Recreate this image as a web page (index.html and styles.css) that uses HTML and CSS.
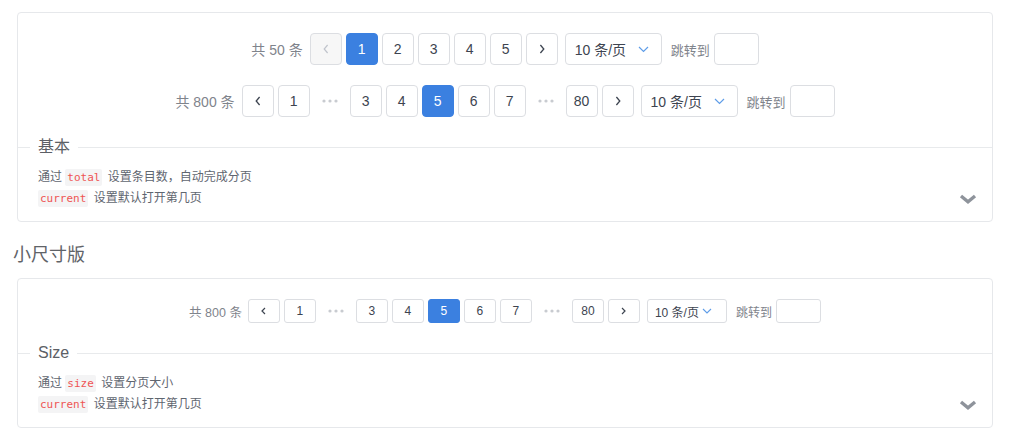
FILE: index.html
```html
<!DOCTYPE html>
<html lang="zh">
<head>
<meta charset="utf-8">
<title>Page</title>
<link rel="stylesheet" href="styles.css">
</head>
<body>
<div class="page">
  <section class="example">
    <div class="demo">
      <div class="pager">
        <span class="total">共 50 条</span>
        <ul class="items">
          <li class="item arrow disabled"><svg width="6" height="10" viewBox="0 0 6 10"><polyline points="4.6,1 1.2,5 4.6,9" fill="none" stroke="currentColor" stroke-width="1.2"/></svg></li>
          <li class="item active">1</li>
          <li class="item">2</li>
          <li class="item">3</li>
          <li class="item">4</li>
          <li class="item">5</li>
          <li class="item arrow"><svg width="6" height="10" viewBox="0 0 6 10"><polyline points="1.4,1 4.8,5 1.4,9" fill="none" stroke="currentColor" stroke-width="1.3"/></svg></li>
        </ul>
        <div class="sizer"><span>10 条/页</span><svg width="11" height="7" viewBox="0 0 11 7"><polyline points="1,1 5.5,5.5 10,1" fill="none" stroke="currentColor" stroke-width="1.2"/></svg></div>
        <div class="jump"><span>跳转到</span><span class="input"></span></div>
      </div>
      <div class="pager">
        <span class="total">共 800 条</span>
        <ul class="items">
          <li class="item arrow"><svg width="6" height="10" viewBox="0 0 6 10"><polyline points="4.6,1 1.2,5 4.6,9" fill="none" stroke="currentColor" stroke-width="1.3"/></svg></li>
          <li class="item">1</li>
          <li class="item more"><svg width="16" height="4" viewBox="0 0 16 4"><circle cx="2" cy="2" r="1.6"/><circle cx="8" cy="2" r="1.6"/><circle cx="14" cy="2" r="1.6"/></svg></li>
          <li class="item">3</li>
          <li class="item">4</li>
          <li class="item active">5</li>
          <li class="item">6</li>
          <li class="item">7</li>
          <li class="item more"><svg width="16" height="4" viewBox="0 0 16 4"><circle cx="2" cy="2" r="1.6"/><circle cx="8" cy="2" r="1.6"/><circle cx="14" cy="2" r="1.6"/></svg></li>
          <li class="item">80</li>
          <li class="item arrow"><svg width="6" height="10" viewBox="0 0 6 10"><polyline points="1.4,1 4.8,5 1.4,9" fill="none" stroke="currentColor" stroke-width="1.3"/></svg></li>
        </ul>
        <div class="sizer"><span>10 条/页</span><svg width="11" height="7" viewBox="0 0 11 7"><polyline points="1,1 5.5,5.5 10,1" fill="none" stroke="currentColor" stroke-width="1.2"/></svg></div>
        <div class="jump"><span>跳转到</span><span class="input"></span></div>
      </div>
    </div>
    <div class="split"><span class="legend">基本</span></div>
    <div class="desc">
      <div class="desc-text">
        <p>通过 <code>total</code> 设置条目数，自动完成分页</p>
        <p><code>current</code> 设置默认打开第几页</p>
      </div>
      <span class="toggle"><svg width="18" height="21" viewBox="0 0 18 21"><polyline points="2,8 9,13.8 16,8" fill="none" stroke="currentColor" stroke-width="3.4"/></svg></span>
    </div>
  </section>

  <h2 class="title">小尺寸版</h2>

  <section class="example">
    <div class="demo">
      <div class="pager small">
        <span class="total">共 800 条</span>
        <ul class="items">
          <li class="item arrow"><svg width="5" height="8" viewBox="0 0 5 8"><polyline points="4,1 1,4 4,7" fill="none" stroke="currentColor" stroke-width="1.2"/></svg></li>
          <li class="item">1</li>
          <li class="item more"><svg width="16" height="4" viewBox="0 0 16 4"><circle cx="2" cy="2" r="1.6"/><circle cx="8" cy="2" r="1.6"/><circle cx="14" cy="2" r="1.6"/></svg></li>
          <li class="item">3</li>
          <li class="item">4</li>
          <li class="item active">5</li>
          <li class="item">6</li>
          <li class="item">7</li>
          <li class="item more"><svg width="16" height="4" viewBox="0 0 16 4"><circle cx="2" cy="2" r="1.6"/><circle cx="8" cy="2" r="1.6"/><circle cx="14" cy="2" r="1.6"/></svg></li>
          <li class="item">80</li>
          <li class="item arrow"><svg width="5" height="8" viewBox="0 0 5 8"><polyline points="1,1 4,4 1,7" fill="none" stroke="currentColor" stroke-width="1.2"/></svg></li>
        </ul>
        <div class="sizer"><span>10 条/页</span><svg width="10" height="6" viewBox="0 0 10 6"><polyline points="1,1 5,5 9,1" fill="none" stroke="currentColor" stroke-width="1.1"/></svg></div>
        <div class="jump"><span>跳转到</span><span class="input"></span></div>
      </div>
    </div>
    <div class="split"><span class="legend">Size</span></div>
    <div class="desc">
      <div class="desc-text">
        <p>通过 <code>size</code> 设置分页大小</p>
        <p><code>current</code> 设置默认打开第几页</p>
      </div>
      <span class="toggle"><svg width="18" height="21" viewBox="0 0 18 21"><polyline points="2,8 9,13.8 16,8" fill="none" stroke="currentColor" stroke-width="3.4"/></svg></span>
    </div>
  </section>
</div>
</body>
</html>
```

FILE: styles.css
```css
html, body {
  margin: 0;
  padding: 0;
  background: #fff;
}

body {
  font-family: "Liberation Sans", "Noto Sans CJK SC", sans-serif;
  color: #515a6e;
}

.page {
  padding: 12px 23px 0 13px;
}

.example {
  margin-left: 4px;
  border: 1px solid #e6e8eb;
  border-radius: 4px;
  background: #fff;
}

.demo {
  display: flex;
  flex-direction: column;
  align-items: center;
  gap: 20px;
  padding: 20px;
}

.pager {
  display: flex;
  align-items: center;
  font-size: 14px;
}

.total {
  margin-right: 7px;
  font-size: 14px;
  color: #7f848c;
  white-space: nowrap;
}

.items {
  display: flex;
  gap: 4px;
  margin: 0;
  padding: 0;
  list-style: none;
}

.item {
  box-sizing: border-box;
  min-width: 32px;
  height: 32px;
  line-height: 30px;
  border: 1px solid #dcdee2;
  border-radius: 4px;
  text-align: center;
  color: #3d4450;
  background: #fff;
  display: flex;
  align-items: center;
  justify-content: center;
}

.item.arrow {
  color: #3d4450;
}

.item.disabled {
  background: #f7f7f7;
  color: #c0c4cc;
}

.item.active {
  background: #3b80e0;
  border-color: #3b80e0;
  color: #fff;
}

.item.more {
  border-color: transparent;
  fill: #c8cbd0;
}

.sizer {
  box-sizing: border-box;
  width: 97px;
  height: 32px;
  margin-left: 7px;
  padding: 0 12px 0 9px;
  border: 1px solid #dcdee2;
  border-radius: 4px;
  display: flex;
  align-items: center;
  justify-content: space-between;
  color: #3d4450;
  white-space: nowrap;
}

.sizer svg {
  color: #5f9de8;
}

.jump {
  display: flex;
  align-items: center;
  gap: 4px;
  margin-left: 9px;
  font-size: 13px;
  color: #7f848c;
  white-space: nowrap;
}

.input {
  box-sizing: border-box;
  width: 45px;
  height: 32px;
  border: 1px solid #dcdee2;
  border-radius: 4px;
}

/* small */
.pager.small .total {
  font-size: 12.5px;
  margin-right: 6px;
}

.pager.small .item {
  height: 24px;
  line-height: 22px;
  font-size: 12px;
  border-radius: 3px;
}

.pager.small .item.more {
  border-color: transparent;
}

.pager.small .sizer {
  width: 80px;
  height: 24px;
  margin-left: 7px;
  padding: 0 14px 0 7px;
  font-size: 12px;
  border-radius: 3px;
}

.pager.small .jump {
  font-size: 12px;
  margin-left: 9px;
}

.pager.small .input {
  height: 24px;
  border-radius: 3px;
}

/* split line with legend */
.split {
  display: flex;
  align-items: center;
  height: 20px;
}

.split::before,
.split::after {
  content: "";
  height: 1px;
  background: #e8eaec;
}

.split::before {
  flex: 0 0 12px;
}

.split::after {
  flex: 1 1 auto;
}

.legend {
  padding: 0 8px;
  font-size: 16px;
  line-height: 20px;
  color: #5c6066;
}

/* description */
.desc {
  display: flex;
  justify-content: space-between;
  align-items: flex-end;
  padding: 10px 15px 12px 20px;
}

.desc-text p {
  margin: 0;
  font-size: 12px;
  line-height: 21px;
  color: #5f6670;
}

code {
  font-family: "DejaVu Sans Mono", "Liberation Mono", monospace;
  font-size: 11px;
  color: #ef5454;
  background: #f4f4f5;
  padding: 2px 2px;
  margin: 0 2px;
  border-radius: 2px;
}

.desc-text p code:first-child {
  margin-left: 0;
}

.toggle {
  display: flex;
  color: #8e939b;
}

.title {
  margin: 20px 0 9px;
  font-size: 18px;
  line-height: 27px;
  font-weight: normal;
  color: #5f6368;
}
```
